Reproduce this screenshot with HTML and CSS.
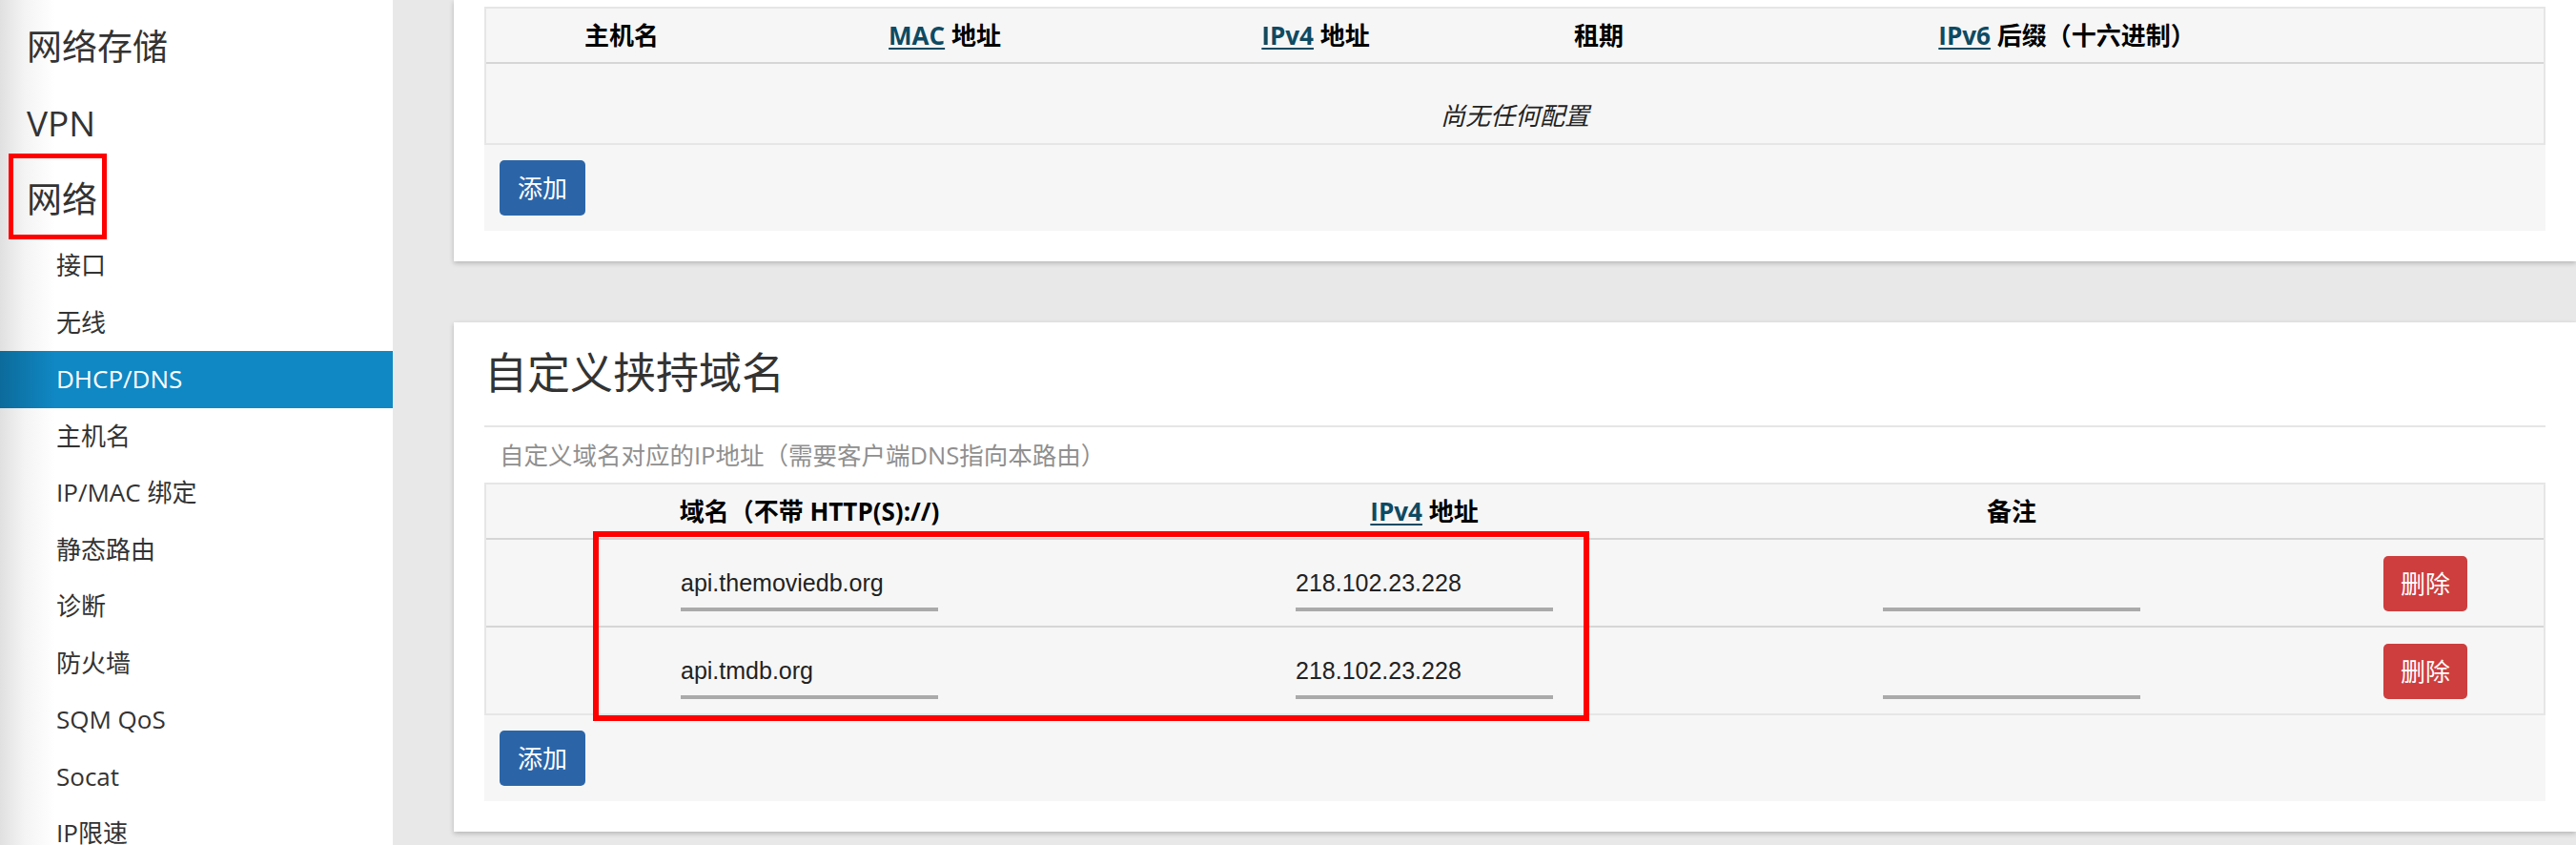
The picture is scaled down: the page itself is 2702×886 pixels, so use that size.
FILE: index.html
```html
<!DOCTYPE html>
<html lang="zh-CN">
<head>
<meta charset="utf-8">
<title>DHCP/DNS - LuCI</title>
<link rel="stylesheet" href="styles.css">
</head>
<body>
<div class="layout">
  <nav class="sidebar">
    <div class="nav-top">网络存储</div>
    <div class="nav-top">VPN</div>
    <div class="nav-top nav-current">网络<span class="mark mark-nav"></span></div>
    <ul class="nav-sub">
      <li>接口</li>
      <li>无线</li>
      <li class="active">DHCP/DNS</li>
      <li>主机名</li>
      <li>IP/MAC 绑定</li>
      <li>静态路由</li>
      <li>诊断</li>
      <li>防火墙</li>
      <li>SQM QoS</li>
      <li>Socat</li>
      <li>IP限速</li>
    </ul>
  </nav>

  <main class="main">
    <section class="card card-first">
      <table class="tbl">
        <thead>
          <tr>
            <th class="l-host">主机名</th>
            <th class="l-mac"><a href="#">MAC</a> 地址</th>
            <th class="l-ip4"><a href="#">IPv4</a> 地址</th>
            <th class="l-lease">租期</th>
            <th class="l-ip6"><a href="#">IPv6</a> 后缀（十六进制）</th>
            <th class="l-act"></th>
          </tr>
        </thead>
        <tbody>
          <tr>
            <td class="td-empty" colspan="6">尚无任何配置</td>
          </tr>
        </tbody>
      </table>
      <div class="create">
        <button class="btn btn-add" type="button">添加</button>
      </div>
    </section>

    <section class="card card-second">
      <h2 class="card-title">自定义挟持域名</h2>
      <div class="card-descr">自定义域名对应的IP地址（需要客户端DNS指向本路由）</div>
      <div class="tbl-wrap">
        <table class="tbl">
          <thead>
            <tr>
              <th class="d-name">域名（不带 HTTP(S)://)</th>
              <th class="d-ip"><a href="#">IPv4</a> 地址</th>
              <th class="d-note">备注</th>
              <th class="d-act"></th>
            </tr>
          </thead>
          <tbody>
            <tr>
              <td><input class="field" type="text" value="api.themoviedb.org"></td>
              <td><input class="field" type="text" value="218.102.23.228"></td>
              <td><input class="field" type="text" value=""></td>
              <td><button class="btn btn-del" type="button">删除</button></td>
            </tr>
            <tr>
              <td><input class="field" type="text" value="api.tmdb.org"></td>
              <td><input class="field" type="text" value="218.102.23.228"></td>
              <td><input class="field" type="text" value=""></td>
              <td><button class="btn btn-del" type="button">删除</button></td>
            </tr>
          </tbody>
        </table>
        <span class="mark mark-table"></span>
      </div>
      <div class="create">
        <button class="btn btn-add" type="button">添加</button>
      </div>
    </section>
  </main>
</div>
</body>
</html>
```

FILE: styles.css
```css
* {
  box-sizing: border-box;
}

html,
body {
  margin: 0;
  padding: 0;
}

body {
  width: 2702px;
  height: 886px;
  overflow: hidden;
  background: #e8e8e8;
  font-family: "Open Sans", "Noto Sans CJK SC", sans-serif;
  color: #333;
}

.layout {
  display: flex;
  height: 886px;
}

/* ---------- sidebar ---------- */
.sidebar {
  flex: none;
  width: 412px;
  height: 886px;
  padding-top: 9px;
  background: linear-gradient(to right, #e0e0e0 0, #f4f4f4 26px, #ffffff 58px);
}

.nav-top {
  font-size: 37px;
  line-height: 80px;
  padding-left: 28px;
  color: #333;
}

.nav-current {
  position: relative;
}

.mark {
  position: absolute;
  border: 6px solid #ff0000;
  pointer-events: none;
}

.mark-nav {
  top: -8px;
  left: 9px;
  width: 103px;
  height: 90px;
  border-width: 5px;
}

.nav-sub {
  list-style: none;
  margin: 0;
  padding: 0;
}

.nav-sub li {
  height: 59.5px;
  line-height: 59.5px;
  padding-left: 59px;
  font-size: 26px;
  color: #333;
}

.nav-sub li.active {
  color: #fff;
  background: linear-gradient(to right, #0c6b9b 0, #1088c4 58px);
}

/* ---------- main ---------- */
.main {
  flex: 1;
  min-width: 0;
  display: flex;
  flex-direction: column;
  gap: 64px;
  padding-left: 64px;
}

.card {
  background: #fff;
  box-shadow: 0 2px 5px rgba(0, 0, 0, 0.22);
  padding: 0 32px 32px;
}

.card-first {
  padding-top: 7px;
}

.card-second {
  padding-top: 23px;
}

.card-title {
  margin: 0;
  font-size: 45px;
  font-weight: 400;
  line-height: 60px;
  color: #333;
  padding-bottom: 25px;
  border-bottom: 2px solid #e6e6e6;
}

.card-descr {
  margin: 11px 0 11px;
  padding-left: 16px;
  font-size: 25.5px;
  line-height: 36px;
  color: #8f8f8f;
}

/* ---------- tables ---------- */
.tbl-wrap {
  position: relative;
}

.tbl {
  width: 100%;
  table-layout: fixed;
  border-collapse: separate;
  border-spacing: 0;
  background: #f6f6f6;
  border: 2px solid #e6e6e6;
  border-bottom: 0;
}

.tbl th {
  height: 58px;
  padding: 0;
  font-size: 26px;
  font-weight: 700;
  line-height: 1;
  color: #000;
  text-align: center;
  vertical-align: middle;
  border-bottom: 2px solid #d6d6d6;
}

.tbl th a {
  color: #0e4a62;
  text-decoration: underline;
  text-decoration-thickness: 2px;
  text-underline-offset: 3px;
}

.tbl td {
  padding: 17px 0 15px;
  text-align: center;
  vertical-align: bottom;
  border-bottom: 2px solid #d6d6d6;
}

.tbl tbody tr:last-child td {
  border-bottom-color: #e6e6e6;
}

.tbl td.td-empty {
  padding: 36px 0 11px;
  vertical-align: top;
  font-size: 26px;
  line-height: 36px;
  font-style: italic;
  color: #222;
}

/* column widths: leases table */
.l-host { width: 284px; }
.l-mac { width: 394px; }
.l-ip4 { width: 384px; }
.l-lease { width: 210px; }
.l-ip6 { width: 772px; }
.l-act { width: 114px; }

/* column widths: domain table */
.d-name { width: 678px; }
.d-ip { width: 612px; }
.d-note { width: 620px; }
.d-act { width: 248px; }

.field {
  display: block;
  width: 270px;
  height: 49px;
  margin: 0 auto;
  padding: 0 0 7px;
  border: 0;
  border-bottom: 4px solid #aaaaaa;
  border-radius: 0;
  background: transparent;
  font-family: "Liberation Sans", Arial, sans-serif;
  font-size: 25px;
  color: #222;
  outline: none;
}

.mark-table {
  top: 51px;
  left: 114px;
  width: 1045px;
  height: 199px;
}

/* ---------- create row & buttons ---------- */
.create {
  padding: 16px;
  background: #f6f6f6;
}

.btn {
  display: inline-block;
  height: 58px;
  border: 0;
  border-radius: 5px;
  font-family: "Open Sans", "Noto Sans CJK SC", sans-serif;
  font-size: 26px;
  line-height: 58px;
  color: #fff;
  cursor: pointer;
  vertical-align: bottom;
}

.btn-add {
  padding: 0 19px;
  background: #2b65a8;
}

.btn-del {
  padding: 0 18px;
  background: #ce3e3e;
}
```
